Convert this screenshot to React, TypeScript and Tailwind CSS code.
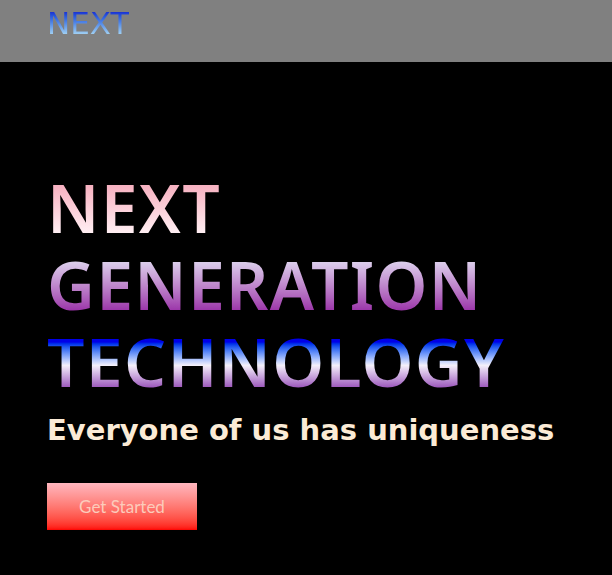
export default function App() {
  return (
    <div className="min-h-screen w-full bg-black" style={{ fontFamily: '"DejaVu Sans", sans-serif' }}>
      <header className="h-[62px] bg-[#808080] pl-[47px] pt-[3px]">
        <span className="bg-linear-to-b from-[#1a1ad0] from-15% to-[#b8e4f4] to-90% bg-clip-text text-[31px] leading-[40px] text-transparent">
          NEXT
        </span>
      </header>
      <section className="pl-[47px] pt-[107px]">
        <h1
          className="flex flex-col text-[66px] font-semibold leading-[77px] tracking-[1.3px]"
          style={{ fontFamily: '"Noto Sans", sans-serif' }}
        >
          <span className="w-fit bg-linear-to-b from-[#f6b0c0] from-20% to-[#fff0f4] to-85% bg-clip-text text-transparent">NEXT</span>
          <span className="w-fit bg-linear-to-b from-[#dcd0ec] from-20% to-[#9a30a8] to-85% bg-clip-text text-transparent">GENERATION</span>
          <span className="w-fit bg-linear-to-b from-[#0000e8] from-25% via-[#f4f0fa] via-55% to-[#9850b8] to-85% bg-clip-text text-transparent">TECHNOLOGY</span>
        </h1>
        <p className="mt-[10px] text-[29px] font-bold leading-[40px] text-[#fbebd6]">Everyone of us has uniqueness</p>
        <button
          className="mt-[33px] h-[47px] w-[150px] bg-linear-to-b from-[#ffb6bf] to-[#ff0000] text-[17px] text-[#fccbbb]"
          style={{ fontFamily: 'Lato, sans-serif' }}
        >
          Get Started
        </button>
      </section>
    </div>
  );
}
